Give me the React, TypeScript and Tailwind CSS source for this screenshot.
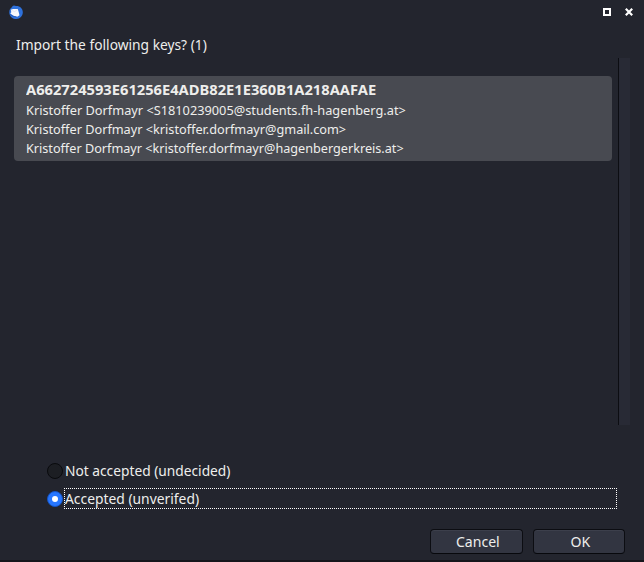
import React from "react";

const identities = [
  { text: "Kristoffer Dorfmayr <S1810239005@students.fh-hagenberg.at>", fit: "scale-x-[0.968]" },
  { text: "Kristoffer Dorfmayr <kristoffer.dorfmayr@gmail.com>", fit: "scale-x-[0.963]" },
  { text: "Kristoffer Dorfmayr <kristoffer.dorfmayr@hagenbergerkreis.at>", fit: "scale-x-[0.959]" },
];

function TitleBar() {
  return (
    <header className="flex h-[26px] items-start pl-[9px] pr-[11px] pt-[5px]">
      <svg width="14" height="15" viewBox="0 0 14 15" aria-hidden="true">
        <path d="M5 .4 7 1C11 .8 14 3.7 13.8 7.5 13.7 11 11 13.8 7.4 14 3.7 14 1 12 .4 8.5-.1 5.7 1 3.6 2.8 2.3L3.7 1.1Z" fill="#2e71dc" />
        <path d="M1.8 4.8 4 4.1 8.8 4l.9 3 .8 3.3-2.3 1.5-3.4-.7-2.8-2-.7-.8 1-1Z" fill="#f7f8fc" />
        <path d="m2 5 3.7 1.7L8.8 4.2" fill="none" stroke="#d5d9e7" strokeWidth=".6" />
        <path d="M1 9.5 4 11.2l3.5.7" fill="none" stroke="#1f4fa8" strokeWidth=".7" />
      </svg>
      <div className="ml-auto flex items-start pt-[3px]">
        <span className="box-border block size-2 border-2 border-white" />
        <svg className="ml-[14px]" width="8" height="8" viewBox="0 0 8 8" aria-hidden="true">
          <path d="m.8.8 6.4 6.4M7.2.8.8 7.2" stroke="white" strokeWidth="2.2" />
        </svg>
      </div>
    </header>
  );
}

function DialogButton({ children, className }: { children: React.ReactNode; className: string }) {
  return (
    <button className={`flex h-[25px] items-center justify-center rounded-[4px] border border-[#0c0d12] border-b-[#07080c] bg-[#323541] pl-[2px] text-[14.67px] leading-5 shadow-[inset_0_1px_0_#3c3f4b] ${className}`}>
      <span className="-translate-y-px scale-x-[0.96]">{children}</span>
    </button>
  );
}

export default function App() {
  return (
    <main className="flex h-[562px] w-[644px] flex-col overflow-hidden border-b-2 border-[#15151b] bg-[#23252e] font-['Noto_Sans',sans-serif] text-[#eeeeec]">
      <TitleBar />
      <h1 className="ml-4 mt-[8px] h-[24px] w-fit origin-left scale-x-[0.94] whitespace-nowrap text-[14.67px] font-normal leading-5">
        Import the following keys? (1)
      </h1>
      <div className="ml-[14px] flex h-[367px] w-[616px] justify-between">
        <section className="mt-[18px] h-[85px] w-[598px] rounded-[4px] bg-[#484a51] pl-3 pt-[3px]">
          <h2 className="h-[22px] w-fit origin-left scale-x-[1.002] whitespace-nowrap text-[14.67px] font-bold leading-5">
            A662724593E61256E4ADB82E1E360B1A218AAFAE
          </h2>
          {identities.map(({ text, fit }) => (
            <p key={text} className={`w-fit origin-left whitespace-nowrap text-[13.2px] leading-[19px] ${fit}`}>{text}</p>
          ))}
        </section>
        <div className="w-3 border-l border-[#0c0d12] bg-[#282a35]" />
      </div>
      <div className="ml-[47px] mt-[35px] flex w-[570px] flex-col gap-[7px] text-[14.67px]">
        <label className="flex h-[21px] items-center">
          <span className="size-4 shrink-0 rounded-full border border-[#090a0d] bg-[#1c1e23]" />
          <span className="mb-[2px] ml-[2px] origin-left scale-x-[0.938] leading-5">Not accepted (undecided)</span>
        </label>
        <label className="flex h-[21px] items-center">
          <span className="flex size-4 shrink-0 items-center justify-center rounded-full border border-[#1453c4] bg-[#2777ff]">
            <span className="size-[6px] rounded-full bg-white" />
          </span>
          <span className="ml-px h-[21px] flex-1 border border-dotted border-white leading-[19px]">
            <span className="inline-block origin-left scale-x-[0.945]">Accepted (unverifed)</span>
          </span>
        </label>
      </div>
      <footer className="ml-auto mr-[19px] mt-[20px] flex gap-[10px]">
        <DialogButton className="w-[93px]">Cancel</DialogButton>
        <DialogButton className="w-[92px]">OK</DialogButton>
      </footer>
    </main>
  );
}
